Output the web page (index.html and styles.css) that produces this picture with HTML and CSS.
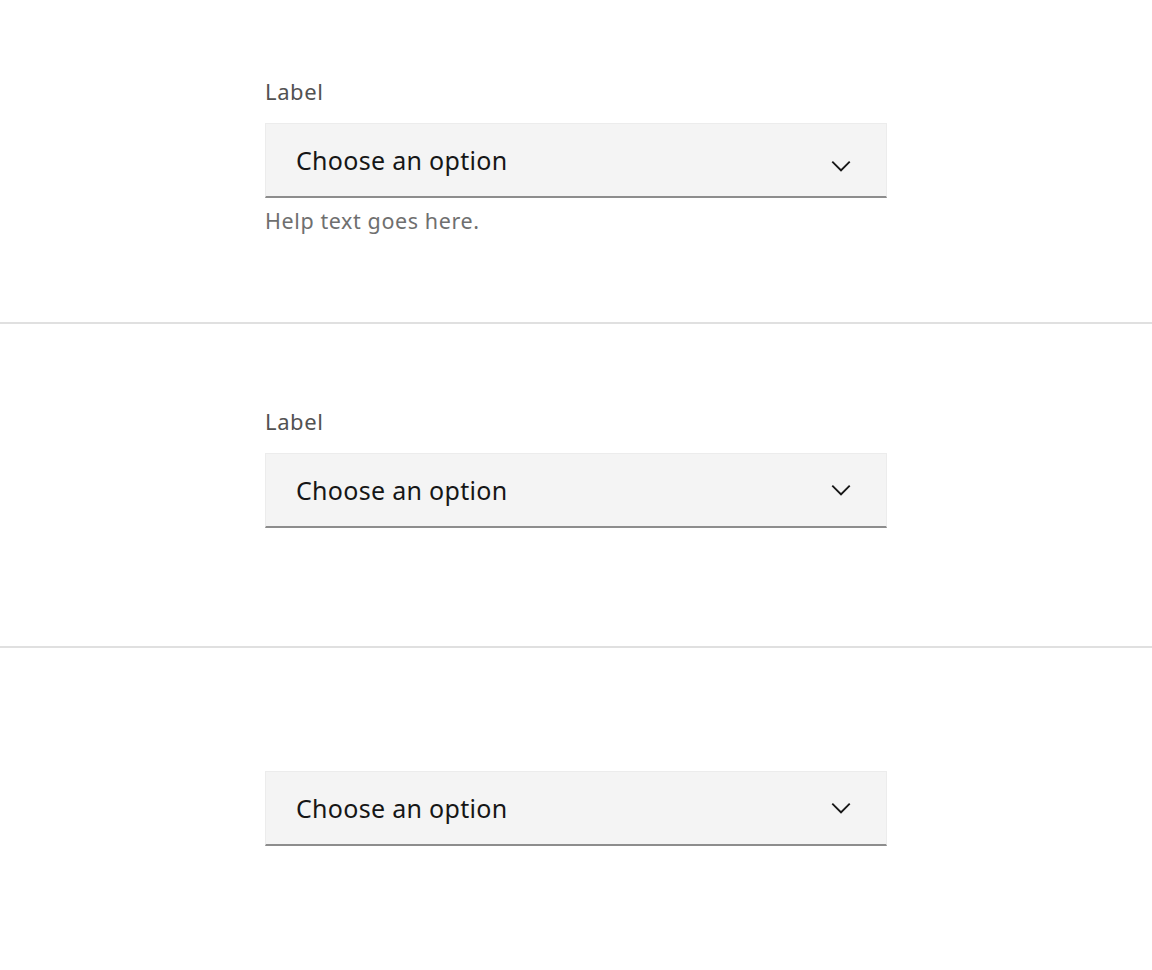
FILE: index.html
```html
<!DOCTYPE html>
<html lang="en">
<head>
  <meta charset="UTF-8" />
  <meta name="viewport" content="width=device-width, initial-scale=1.0"/>
  <title>Select</title>
  <link rel="stylesheet" href="styles.css">
</head>
<body>

  <!-- Select with helper text -->
  <section class="demo demo--first">
    <div class="field">
      <label class="field-label" for="sel1">Label</label>
      <div class="select">
        <span class="select-value" id="sel1">Choose an option</span>
        <svg class="select-icon select-icon--low" viewBox="0 0 16 16" aria-hidden="true">
          <path d="M8 11L3 6 3.7 5.3 8 9.6 12.3 5.3 13 6z"/>
        </svg>
      </div>
      <div class="field-help">Help text goes here.</div>
    </div>
  </section>

  <hr class="divider">

  <!-- Select with label only -->
  <section class="demo demo--second">
    <div class="field">
      <label class="field-label" for="sel2">Label</label>
      <div class="select">
        <span class="select-value" id="sel2">Choose an option</span>
        <svg class="select-icon" viewBox="0 0 16 16" aria-hidden="true">
          <path d="M8 11L3 6 3.7 5.3 8 9.6 12.3 5.3 13 6z"/>
        </svg>
      </div>
    </div>
  </section>

  <hr class="divider">

  <!-- Select, no label -->
  <section class="demo demo--third">
    <div class="field">
      <div class="select">
        <span class="select-value">Choose an option</span>
        <svg class="select-icon" viewBox="0 0 16 16" aria-hidden="true">
          <path d="M8 11L3 6 3.7 5.3 8 9.6 12.3 5.3 13 6z"/>
        </svg>
      </div>
    </div>
  </section>

</body>
</html>
```

FILE: styles.css
```css
body {
  margin: 0;
  font-family: 'Noto Sans', 'Open Sans', sans-serif;
  background: #fff;
  color: #161616;
}

.demo {
  height: 322px;
  box-sizing: border-box;
  padding-left: 265px;
}

.demo--first {
  padding-top: 76px;
}

.demo--second {
  padding-top: 82px;
}

.demo--third {
  padding-top: 123px;
}

.divider {
  margin: 0;
  border: none;
  height: 2px;
  background: #e0e0e0;
}

.field {
  width: 622px;
  display: flex;
  flex-direction: column;
}

.field-label {
  font-size: 22px;
  line-height: 30px;
  letter-spacing: 0.6px;
  color: #525252;
  margin-bottom: 17px;
}

.select {
  height: 75px;
  box-sizing: border-box;
  background: #f4f4f4;
  border: 1px solid #ececec;
  border-bottom: 2px solid #8d8d8d;
  display: flex;
  align-items: center;
  justify-content: space-between;
  padding: 0 30px 0 30px;
}

.select-value {
  font-size: 25px;
  letter-spacing: 0.3px;
  color: #161616;
}

.select-icon {
  width: 30px;
  height: 30px;
  fill: #161616;
}

.select-icon--low {
  position: relative;
  top: 6px;
}

.field-help {
  margin-top: 8px;
  font-size: 21.5px;
  line-height: 30px;
  letter-spacing: 0.6px;
  color: #6f6f6f;
}
```
